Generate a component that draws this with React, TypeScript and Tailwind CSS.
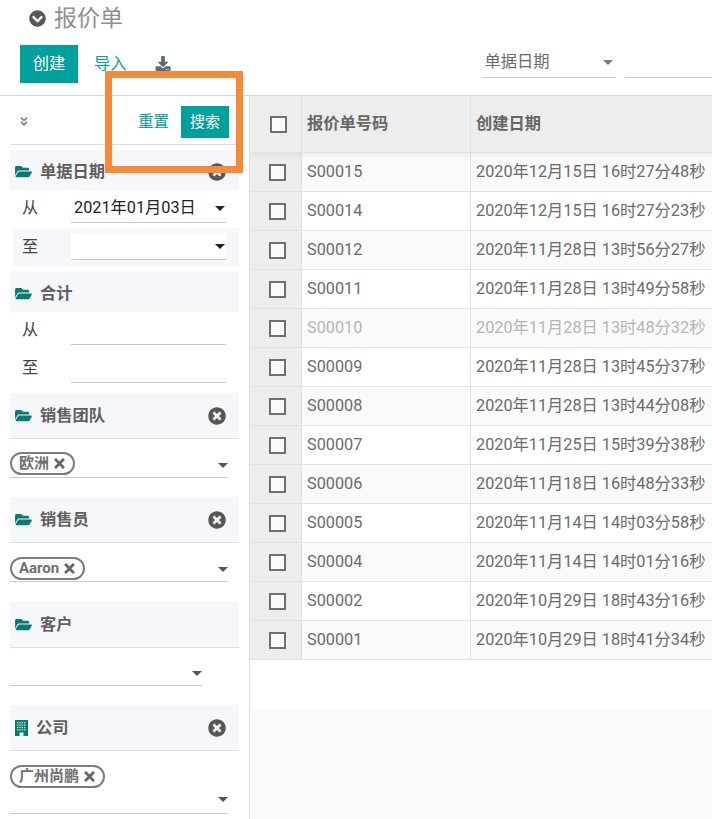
import { FaAngleDoubleDown, FaChevronCircleDown, FaDownload, FaFolderOpen, FaTimes, FaTimesCircle } from "react-icons/fa";

const FONT = "font-['Roboto','Noto_Sans_CJK_SC',sans-serif]";

const rows = [
  { code: "S00015", date: "2020年12月15日 16时27分48秒" },
  { code: "S00014", date: "2020年12月15日 16时27分23秒" },
  { code: "S00012", date: "2020年11月28日 13时56分27秒" },
  { code: "S00011", date: "2020年11月28日 13时49分58秒" },
  { code: "S00010", date: "2020年11月28日 13时48分32秒", muted: true },
  { code: "S00009", date: "2020年11月28日 13时45分37秒" },
  { code: "S00008", date: "2020年11月28日 13时44分08秒" },
  { code: "S00007", date: "2020年11月25日 15时39分38秒" },
  { code: "S00006", date: "2020年11月18日 16时48分33秒" },
  { code: "S00005", date: "2020年11月14日 14时03分58秒" },
  { code: "S00004", date: "2020年11月14日 14时01分16秒" },
  { code: "S00002", date: "2020年10月29日 18时43分16秒" },
  { code: "S00001", date: "2020年10月29日 18时41分34秒" },
];

function Caret({ className = "border-t-[#4c4c4c]" }: { className?: string }) {
  return <span className={`h-0 w-0 border-x-[5px] border-t-[5px] border-x-transparent ${className}`} />;
}

function Box() {
  return <span className="block h-[17px] w-[17px] border-2 border-[#707070] bg-[#fafafa]" />;
}

function BuildingIcon() {
  const windows = [0, 1, 2, 3].flatMap((r) => [0, 1, 2, 3].map((c) => [c, r]));
  return (
    <svg width="13" height="16" viewBox="0 0 13 16" className="shrink-0">
      <rect width="13" height="16" fill="#0b7a70" />
      {windows.map(([c, r]) => (
        <rect key={`${c}-${r}`} x={2 + c * 2.3} y={2 + r * 2.4} width="1.4" height="1.4" fill="#b9d8d4" />
      ))}
      <rect x="4.5" y="12.5" width="4" height="3.5" fill="#e8f2f1" />
    </svg>
  );
}

function FilterHead({ label, clear = true, building = false, className = "h-[46px] border-b border-[#dee2e6]" }: { label: string; clear?: boolean; building?: boolean; className?: string }) {
  return (
    <div className={`flex items-center bg-[#f6f7fa] pl-[5px] pr-[13px] ${className}`}>
      {building ? <BuildingIcon /> : <FaFolderOpen className="h-[15px] w-[17px] text-[#0b7a70]" />}
      <span className={`pt-[2px] text-[16.25px] font-bold text-[#5f5f5f] ${building ? "ml-[8px]" : "ml-[8px]"}`}>{label}</span>
      {clear && <FaTimesCircle className="ml-auto h-[18px] w-[18px] text-[#5a5555]" />}
    </div>
  );
}

function Tag({ label }: { label: string }) {
  return (
    <span className="flex h-[23px] items-center gap-[5px] rounded-full border-2 border-[#7c7c7c] bg-white pl-[7px] pr-[8px] text-[15px] font-bold leading-none text-[#6f6f6f]">
      {label}
      <FaTimes className="h-[15px] w-[11px] text-[#666666]" />
    </span>
  );
}

function DateField({ label, value, caret, shaded }: { label: string; value?: string; caret?: boolean; shaded?: boolean }) {
  return (
    <div className={`flex h-[38px] items-start pr-[13px] ${shaded ? "ml-[3px] bg-[#f6f7fa] pl-[9px] pt-[5px]" : "pl-[12px] pt-[6px]"}`}>
      <span className={`w-[49px] text-[16.25px] text-[#444444] ${shaded ? "leading-[27px]" : "leading-[24px]"}`}>{label}</span>
      <div className={`flex h-[27px] flex-1 items-center justify-between border-b border-[#c9c9c9] pl-[3px] pr-[1px] text-[16.25px] text-[#222222] ${shaded ? "bg-white" : "pb-[2px]"}`}>
        <span>{value}</span>
        {caret && <Caret className="border-t-[#222222]" />}
      </div>
    </div>
  );
}

export default function App() {
  return (
    <div className={`${FONT} relative h-[819px] w-[712px] overflow-hidden bg-white`}>
      <div className="h-[96px] border-b border-[#d5d5d5]">
        <div className="flex h-[36px] items-center pl-[29px]">
          <FaChevronCircleDown className="h-[17px] w-[17px] text-[#5a5555]" />
          <span className="ml-[8px] text-[23px] leading-none text-[#8f8f8f]">报价单</span>
        </div>
        <div className="flex items-start pl-[20px] pt-[9px]">
          <span className="flex h-[38px] w-[58px] items-center justify-center bg-[#00a09d] text-[16.25px] text-white">创建</span>
          <span className="ml-[16px] flex h-[38px] items-center text-[16.25px] text-[#00a09d]">导入</span>
          <FaDownload className="ml-[28px] mt-[11px] h-[15px] w-[16px] text-[#5f6b78]" />
          <div className="ml-[312px] flex h-[33px] w-[133px] items-center justify-between border-b border-[#c9c9c9] pl-[2px] pr-[3px] pt-[3px] text-[16.25px] text-[#6b6b6b]">
            <span>单据日期</span>
            <Caret className="border-x-[4px] border-t-[4px] border-t-[#777777]" />
          </div>
          <div className="ml-[9px] h-[33px] flex-1 border-b border-[#c9c9c9]" />
        </div>
      </div>

      <div className="flex h-[723px]">
        <aside className="h-full w-[250px] shrink-0 border-r border-[#dee2e6] px-[10px]">
          <div className="flex h-[49px] items-center border-b border-[#dcdcdc] pr-[10px] pt-[4px]">
            <FaAngleDoubleDown className="mb-[2px] ml-[9px] h-[11px] w-[10px] text-[#7b8794]" />
            <span className="ml-auto pt-[1px] text-[15.5px] text-[#00a09d]">重置</span>
            <span className="ml-[12px] flex h-[32px] w-[48px] items-center justify-center bg-[#00a09d] text-[15px] text-white">搜索</span>
          </div>
          <div className="mt-[5px]">
            <FilterHead label="单据日期" className="h-[40px] pt-[3px]" />
            <DateField label="从" value="2021年01月03日" caret />
            <DateField label="至" caret shaded />
          </div>
          <div className="mt-[5px]">
            <FilterHead label="合计" clear={false} className="h-[41px] pt-[3px]" />
            <DateField label="从" />
            <DateField label="至" />
          </div>
          <div className="mt-[5px]">
            <FilterHead label="销售团队" />
            <div className="mr-[11px] flex h-[39px] items-end justify-between border-b border-[#c9c9c9] pb-[2px]">
              <Tag label="欧洲" />
              <Caret className="mb-[7px] border-t-[#555555]" />
            </div>
          </div>
          <div className="mt-[19px]">
            <FilterHead label="销售员" />
            <div className="mr-[11px] flex h-[39px] items-end justify-between border-b border-[#c9c9c9] pb-[1px]">
              <Tag label="Aaron" />
              <Caret className="mb-[8px] border-t-[#555555]" />
            </div>
          </div>
          <div className="mt-[20px]">
            <FilterHead label="客户" clear={false} />
            <div className="mr-[37px] flex h-[38px] items-end justify-end border-b border-[#c9c9c9] pb-[9px]">
              <Caret className="border-t-[#555555]" />
            </div>
          </div>
          <div className="mt-[19px]">
            <FilterHead label="公司" building />
            <div className="mr-[11px] h-[63px] border-b border-[#c9c9c9] pt-[14px]">
              <div className="flex items-start justify-between">
                <Tag label="广州尚鹏" />
                <Caret className="mt-[32px] border-t-[#555555]" />
              </div>
            </div>
          </div>
        </aside>

        <main className="min-w-0 flex-1 overflow-hidden">
          <div className="w-[520px]">
            <div className="relative flex h-[57px] border-b border-[#dee2e6] bg-[#ededed] shadow-[0_3px_6px_rgba(0,0,0,0.05)]">
              <div className="flex w-[52px] items-center justify-center border-r border-[#dee2e6] pl-[5px]"><Box /></div>
              <div className="flex w-[169px] items-center border-r border-[#dee2e6] pl-[5px] text-[16.25px] font-bold text-[#666666]">报价单号码</div>
              <div className="flex flex-1 items-center pl-[5px] text-[16.25px] font-bold text-[#666666]">创建日期</div>
            </div>
            {rows.map((row, i) => (
              <div key={row.code} className={`flex h-[39px] border-b border-[#e1e3ea] ${i % 2 === 0 ? "bg-[#fafafa]" : "bg-white"}`}>
                <div className="flex w-[52px] items-center justify-center border-r border-[#dee2e6] bg-[#ededed] pl-[3px]"><Box /></div>
                <div className={`flex w-[169px] items-center border-r border-[#dee2e6] pl-[5px] text-[16.25px] ${row.muted ? "text-[#b5b5b5]" : "text-[#6b6b6b]"}`}>{row.code}</div>
                <div className={`flex flex-1 items-center whitespace-nowrap pl-[5px] text-[16.25px] ${row.muted ? "text-[#b5b5b5]" : "text-[#6b6b6b]"}`}>{row.date}</div>
              </div>
            ))}
          </div>
          <div className="mt-[50px] h-[110px] bg-[#f9f9f9]" />
        </main>
      </div>

      <div className="absolute left-[105px] top-[71px] h-[102px] w-[138px] border-[7px] border-[#f78a39]" />
    </div>
  );
}
